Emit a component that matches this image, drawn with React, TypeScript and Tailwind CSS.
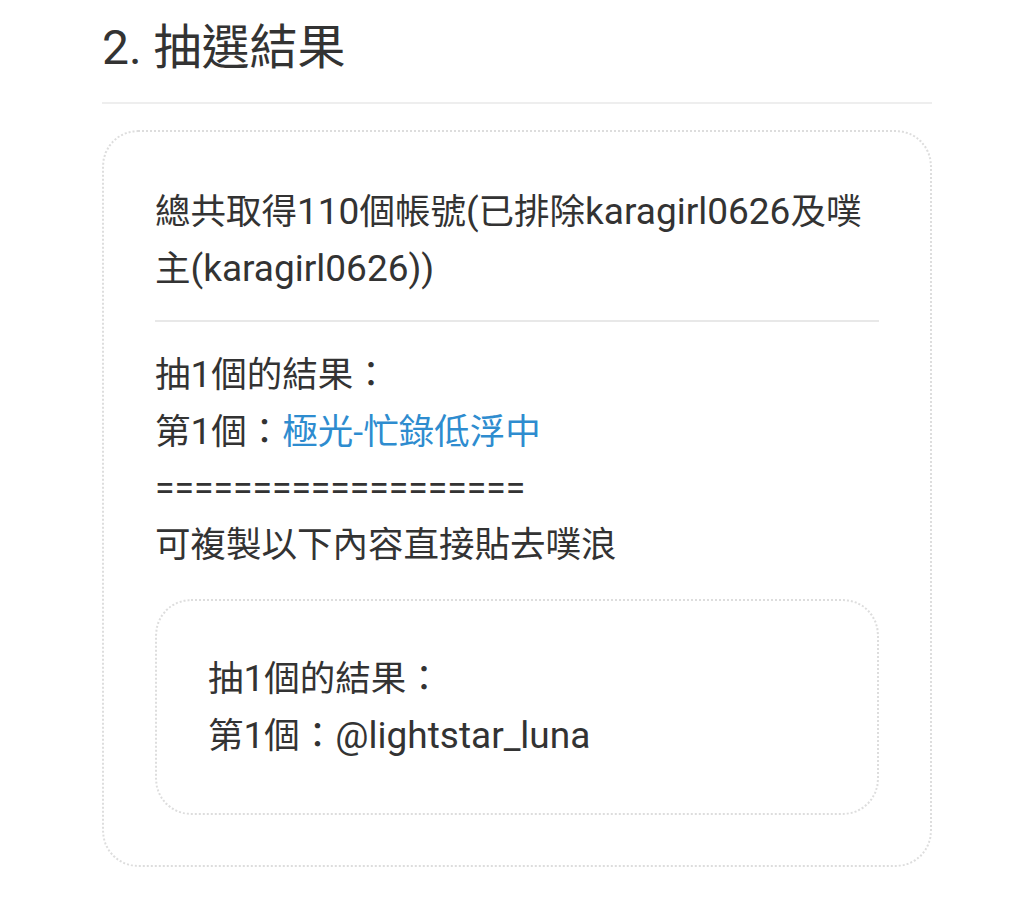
const font = "font-['Roboto','Noto_Sans_CJK_TC',sans-serif]";

// Latin runs sit a touch larger than the CJK glyphs in the reference
const L = ({ children }: { children: string }) => (
  <span className="text-[37px]">{children}</span>
);

const App = () => {
  return (
    <div lang="zh-TW" className={`min-h-[898px] bg-white ${font} text-[#333]`}>
      <div className="ml-[102px] w-[830px] pt-5">
        <h2 className="border-b-2 border-[#eeeeee] pb-[27px] text-[48px] leading-[55px] font-normal">
          2. 抽選結果
        </h2>

        <div className="mt-[26px] rounded-[36px] border-2 border-dotted border-[#dddddd] px-[51px] pt-[52px] pb-[50px] text-[35.5px] leading-[56.5px]">
          <p>
            總共取得<L>110</L>個帳號<L>(</L>已排除<L>karagirl0626</L>及噗主
            <L>(karagirl0626))</L>
          </p>

          <hr className="mt-[23px] mb-[25px] border-t-2 border-[#e8e8e8]" />

          <p>
            抽<L>1</L>個的結果：
          </p>
          <p>
            第<L>1</L>個：<span className="text-[#2e8ccf]">極光-忙錄低浮中</span>
          </p>
          <p>===================</p>
          <p>可複製以下內容直接貼去噗浪</p>

          <div className="mt-[26px] rounded-[36px] border-2 border-dotted border-[#dddddd] px-[51px] pt-[50px] pb-[49px]">
            <p>
              抽<L>1</L>個的結果：
            </p>
            <p>
              第<L>1</L>個：<L>@lightstar_luna</L>
            </p>
          </div>
        </div>
      </div>
    </div>
  );
};

export default App;
